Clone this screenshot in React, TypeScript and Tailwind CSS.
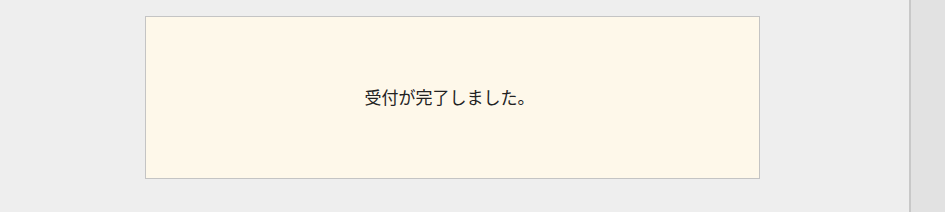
export default function App() {
  return (
    <div className="flex h-[212px] w-[945px] overflow-hidden bg-[#eeeeee]" style={{ fontFamily: '"Noto Sans CJK JP", "Noto Sans", sans-serif' }}>
      <div className="flex-1 pt-[16px] pl-[145px]">
        <div className="flex h-[163px] w-[615px] items-center justify-center border border-[#c4c4c4] bg-[#fef8ea] pr-[6px] pb-[2px] text-[17px] text-[#222222]">
          受付が完了しました。
        </div>
      </div>
      <div className="w-[36px] border-l-[2px] border-[#c8c8c8] bg-[#e2e2e2]" />
    </div>
  );
}
